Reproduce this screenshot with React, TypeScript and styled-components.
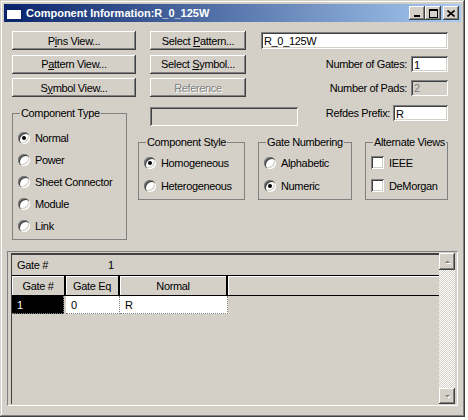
import React from 'react';
import styled, { createGlobalStyle, css } from 'styled-components';

const face = '#d4d0c8';

const GlobalStyle = createGlobalStyle`
  * { box-sizing: border-box; }
  body {
    margin: 0;
    background: #fff;
    font-family: "Liberation Sans", Arial, sans-serif;
    font-size: 11px;
    letter-spacing: -0.35px;
    color: #000;
  }
`;

const raised = css`
  box-shadow: inset -1px -1px #404040, inset 1px 1px #fff, inset -2px -2px #808080, inset 2px 2px ${face};
`;

const sunken = css`
  box-shadow: inset 1px 1px #808080, inset -1px -1px #fff, inset 2px 2px #404040, inset -2px -2px ${face};
`;

const Window = styled.div`
  width: 465px;
  height: 417px;
  padding: 4px;
  background: ${face};
  display: flex;
  flex-direction: column;
  box-shadow: inset -1px -1px #404040, inset 1px 1px ${face}, inset -2px -2px #808080, inset 2px 2px #fff;
`;

const TitleBar = styled.div`
  height: 18px;
  display: flex;
  align-items: center;
  padding: 0 2px;
  background: linear-gradient(90deg, #0a246a, #a6caf0);
`;

const TitleText = styled.span`
  flex: 1;
  margin-left: 4px;
  color: #fff;
  font-weight: bold;
  font-size: 11px;
  letter-spacing: 0;
  white-space: nowrap;
`;

const CaptionButtons = styled.div`
  display: flex;
`;

const CaptionButton = styled.div<{ $gap?: boolean }>`
  width: 16px;
  height: 14px;
  margin-left: ${p => (p.$gap ? 2 : 0)}px;
  background: ${face};
  display: flex;
  align-items: center;
  justify-content: center;
  ${raised}
`;

const TopArea = styled.div`
  padding: 9px 13px 0 8px;
`;

const TopGrid = styled.div`
  display: grid;
  grid-template-columns: 124px 96px 1fr;
  grid-auto-rows: 19px;
  column-gap: 14px;
  row-gap: 4.5px;
`;

const PushButton = styled.button<{ $dim?: boolean }>`
  width: 100%;
  height: 19px;
  padding: 0;
  border: 0;
  font: inherit;
  letter-spacing: inherit;
  background: ${face};
  color: ${p => (p.$dim ? '#808080' : '#000')};
  text-shadow: ${p => (p.$dim ? '1px 1px #fff' : 'none')};
  ${raised}
`;

const Field = styled.input<{ $w?: number; $h?: number; $dim?: boolean }>`
  width: ${p => (p.$w ? `${p.$w}px` : '100%')};
  height: ${p => p.$h ?? 17}px;
  margin: 0;
  border: 0;
  padding: 1px 3px 0;
  font: inherit;
  letter-spacing: inherit;
  outline: none;
  background: ${p => (p.$dim ? face : '#fff')};
  color: ${p => (p.$dim ? '#808080' : '#000')};
  ${sunken}
`;

const RightCell = styled.div`
  margin-left: 1px;
  display: flex;
  align-items: center;
  justify-content: flex-end;
  gap: 4px;
`;

const Label = styled.span`
  white-space: nowrap;
`;

const Lower = styled.div`
  display: flex;
  gap: 11px;
  margin-top: 8px;
`;

const RightColumn = styled.div`
  flex: 1;
  display: flex;
  flex-direction: column;
`;

const RefRow = styled.div`
  display: flex;
  align-items: flex-start;
  height: 21px;
`;

const RefPrefix = styled.div`
  flex: 1;
  display: flex;
  justify-content: flex-end;
  align-items: center;
  gap: 3px;
  height: 16px;
`;

const Groups = styled.div`
  display: flex;
  gap: 13px;
  margin-top: 10px;
`;

const GroupBox = styled.fieldset<{ $w: number; $top?: number }>`
  width: ${p => p.$w}px;
  margin: ${p => p.$top ?? 0}px 0 0 0;
  padding: 0 5px 2px 5px;
  border: 1px solid #808080;
  min-width: 0;
`;

const Legend = styled.legend`
  padding: 0 1px;
  margin-left: 2px;
  line-height: 13px;
  white-space: nowrap;
`;

const Options = styled.div<{ $pad: number }>`
  padding-top: ${p => p.$pad}px;
  display: flex;
  flex-direction: column;
`;

const Option = styled.label<{ $h: number }>`
  height: ${p => p.$h}px;
  display: flex;
  align-items: center;
  gap: 5px;
  white-space: nowrap;
`;

const RadioMark = styled.span<{ $on?: boolean }>`
  width: 12px;
  height: 12px;
  flex: none;
  border-radius: 50%;
  background: #fff;
  position: relative;
  box-shadow: inset 1px 1px #808080, inset 2px 2px #404040, inset -1px -1px #fff, inset -2px -2px ${face};
  &::after {
    content: '';
    display: ${p => (p.$on ? 'block' : 'none')};
    position: absolute;
    left: 4px;
    top: 4px;
    width: 4px;
    height: 4px;
    border-radius: 50%;
    background: #000;
  }
`;

const CheckMark = styled.span`
  width: 13px;
  height: 13px;
  flex: none;
  background: #fff;
  ${sunken}
`;

const Panel = styled.div`
  flex: 1;
  margin: 11px 3px 7px 3px;
  padding: 1px 2px 1px 3px;
  border: 1px solid;
  border-color: #808080 #fff #fff #808080;
  display: flex;
`;

const Frame = styled.div`
  flex: 1;
  display: flex;
  border-left: 1px solid #404040;
`;

const GridArea = styled.div`
  flex: 1;
  display: flex;
  flex-direction: column;
`;

const CaptionRow = styled.div`
  height: 22px;
  border-top: 2px solid #404040;
  display: flex;
  align-items: center;
  padding-left: 5px;
`;

const CaptionName = styled.span`
  width: 91px;
`;

const HeaderRow = styled.div`
  height: 21px;
  display: flex;
  border-top: 1px solid #000;
  border-bottom: 1px solid #000;
`;

const HeaderCell = styled.div<{ $w?: number }>`
  width: ${p => (p.$w ? `${p.$w}px` : 'auto')};
  flex: ${p => (p.$w ? 'none' : 1)};
  display: flex;
  align-items: center;
  justify-content: center;
  background: ${face};
  border-right: 2px solid #000;
  box-shadow: inset 1px 1px #fff;
  &:last-child {
    border-right: 0;
  }
`;

const DataRow = styled.div`
  height: 18px;
  display: flex;
`;

const DataCell = styled.div<{ $w: number; $sel?: boolean }>`
  width: ${p => p.$w}px;
  display: flex;
  align-items: center;
  padding-left: 5px;
  background: ${p => (p.$sel ? '#000' : '#fff')};
  color: ${p => (p.$sel ? '#fff' : '#000')};
  border-right: 1px dotted #808080;
  border-bottom: 1px dotted #808080;
  margin-right: ${p => (p.$sel ? 2 : 0)}px;
`;

const ScrollBar = styled.div`
  width: 16px;
  display: flex;
  flex-direction: column;
`;

const ScrollButton = styled.div<{ $h: number }>`
  height: ${p => p.$h}px;
  background: ${face};
  display: flex;
  align-items: center;
  justify-content: center;
  ${raised}
`;

const Track = styled.div`
  flex: 1;
  background: repeating-conic-gradient(#fff 0 25%, ${face} 0 50%) 0 0 / 2px 2px;
`;

const Radio = ({ label, on, h }: { label: string; on?: boolean; h: number }) => (
  <Option $h={h}>
    <RadioMark $on={on} />
    {label}
  </Option>
);

const Check = ({ label, h }: { label: string; h: number }) => (
  <Option $h={h}>
    <CheckMark />
    {label}
  </Option>
);

const Arrow = ({ down }: { down?: boolean }) => (
  <svg width="9" height="6" viewBox="0 0 9 6">
    {down ? (
      <>
        <polygon points="2,2 7,2 4.5,4.5" fill="#fff" transform="translate(1,1)" />
        <polygon points="2,2 7,2 4.5,4.5" fill="#808080" />
      </>
    ) : (
      <>
        <polygon points="4.5,1.5 7,4 2,4" fill="#fff" transform="translate(1,1)" />
        <polygon points="4.5,1.5 7,4 2,4" fill="#808080" />
      </>
    )}
  </svg>
);

export default function App() {
  return (
    <>
      <GlobalStyle />
      <Window>
        <TitleBar>
          <svg width="16" height="13" viewBox="0 0 16 13">
            <rect x="0.5" y="0.5" width="15" height="12" fill="#fff" stroke="#0a246a" />
            <rect x="1" y="1" width="14" height="2" fill="#0a246a" />
          </svg>
          <TitleText>Component Information:R_0_125W</TitleText>
          <CaptionButtons>
            <CaptionButton>
              <svg width="8" height="8" viewBox="0 0 8 8">
                <rect x="1" y="6" width="6" height="2" fill="#000" />
              </svg>
            </CaptionButton>
            <CaptionButton>
              <svg width="9" height="9" viewBox="0 0 9 9">
                <rect x="0.5" y="0.5" width="8" height="8" fill="none" stroke="#000" />
                <rect x="0" y="0" width="9" height="2" fill="#000" />
              </svg>
            </CaptionButton>
            <CaptionButton $gap>
              <svg width="8" height="7" viewBox="0 0 8 7">
                <path d="M0.5 0.5 L7.5 6.5 M7.5 0.5 L0.5 6.5" stroke="#000" strokeWidth="1.6" />
              </svg>
            </CaptionButton>
          </CaptionButtons>
        </TitleBar>

        <TopArea>
          <TopGrid>
            <PushButton>P<u>i</u>ns View...</PushButton>
            <PushButton>Select <u>P</u>attern...</PushButton>
            <RightCell>
              <Field value="R_0_125W" readOnly />
            </RightCell>

            <PushButton>P<u>a</u>ttern View...</PushButton>
            <PushButton>Select <u>S</u>ymbol...</PushButton>
            <RightCell>
              <Label>Number of Gates:</Label>
              <Field $w={37} $h={16} value="1" readOnly />
            </RightCell>

            <PushButton>S<u>y</u>mbol View...</PushButton>
            <PushButton $dim>Reference</PushButton>
            <RightCell>
              <Label>Number of Pads:</Label>
              <Field $w={37} $h={16} $dim value="2" readOnly />
            </RightCell>
          </TopGrid>

          <Lower>
            <GroupBox $w={115} $top={2}>
              <Legend>Component Type</Legend>
              <Options $pad={7}>
                <Radio label="Normal" on h={22} />
                <Radio label="Power" h={22} />
                <Radio label="Sheet Connector" h={22} />
                <Radio label="Module" h={22} />
                <Radio label="Link" h={22} />
              </Options>
            </GroupBox>

            <RightColumn>
              <RefRow>
                <Field $w={148} $h={19} $dim readOnly value="" style={{ marginLeft: 12, marginTop: 2 }} />
                <RefPrefix>
                  <Label>Refdes Prefix:</Label>
                  <Field $w={55} $h={16} value="R" readOnly />
                </RefPrefix>
              </RefRow>

              <Groups>
                <GroupBox $w={107}>
                  <Legend>Component Style</Legend>
                  <Options $pad={2}>
                    <Radio label="Homogeneous" on h={23} />
                    <Radio label="Heterogeneous" h={23} />
                  </Options>
                </GroupBox>
                <GroupBox $w={94}>
                  <Legend>Gate Numbering</Legend>
                  <Options $pad={2}>
                    <Radio label="Alphabetic" h={23} />
                    <Radio label="Numeric" on h={23} />
                  </Options>
                </GroupBox>
                <GroupBox $w={83}>
                  <Legend>Alternate Views</Legend>
                  <Options $pad={2}>
                    <Check label="IEEE" h={23} />
                    <Check label="DeMorgan" h={23} />
                  </Options>
                </GroupBox>
              </Groups>
            </RightColumn>
          </Lower>
        </TopArea>

        <Panel>
          <Frame>
            <GridArea>
              <CaptionRow>
                <CaptionName>Gate #</CaptionName>
                <span>1</span>
              </CaptionRow>
              <HeaderRow>
                <HeaderCell $w={54}>Gate #</HeaderCell>
                <HeaderCell $w={54}>Gate Eq</HeaderCell>
                <HeaderCell $w={108}>Normal</HeaderCell>
                <HeaderCell />
              </HeaderRow>
              <DataRow>
                <DataCell $w={52} $sel>1</DataCell>
                <DataCell $w={54}>0</DataCell>
                <DataCell $w={108}>R</DataCell>
              </DataRow>
            </GridArea>
            <ScrollBar>
              <ScrollButton $h={17}>
                <Arrow />
              </ScrollButton>
              <Track />
              <ScrollButton $h={16}>
                <Arrow down />
              </ScrollButton>
            </ScrollBar>
          </Frame>
        </Panel>
      </Window>
    </>
  );
}
